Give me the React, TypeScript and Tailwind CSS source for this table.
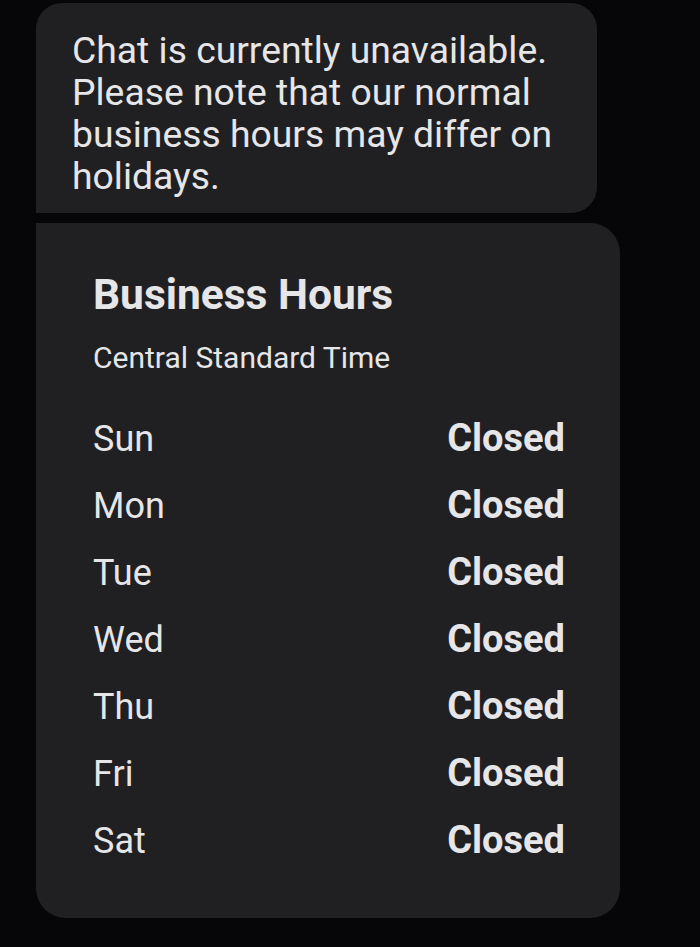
const days = ["Sun", "Mon", "Tue", "Wed", "Thu", "Fri", "Sat"];

export default function App() {
  return (
    <div className="min-h-screen w-[700px] h-[947px] bg-[#060608] font-['Roboto',sans-serif] text-[#e6e6e8] overflow-hidden">
      <div className="pl-[36px] pt-[3px] flex flex-col gap-[10px]">
        <div className="w-[561px] h-[210px] bg-[#202022] rounded-tl-[26px] rounded-tr-[26px] rounded-br-[26px] pl-[36px] pr-[14px] pt-[26px]">
          <p className="text-[37.3px] leading-[42px]">
            Chat is currently unavailable. Please note that our normal business hours may differ on holidays.
          </p>
        </div>
        <div className="w-[584px] h-[695px] bg-[#202022] rounded-tr-[30px] rounded-bl-[30px] rounded-br-[30px] pl-[57px] pr-[55px] pt-[50px]">
          <h2 className="text-[42.5px] leading-[44px] font-bold">Business Hours</h2>
          <p className="mt-[24px] text-[30px] leading-[34px]">Central Standard Time</p>
          <div className="mt-[30px] flex flex-col">
            {days.map((d) => (
              <div key={d} className="flex justify-between items-center h-[67px]">
                <span className="text-[36px]">{d}</span>
                <span className="text-[38px] font-bold">Closed</span>
              </div>
            ))}
          </div>
        </div>
      </div>
    </div>
  );
}
